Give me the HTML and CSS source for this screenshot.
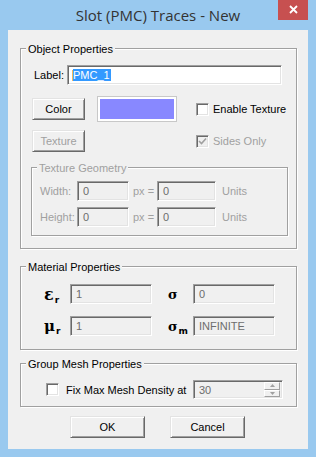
FILE: index.html
```html
<html lang="en">
<head>
    <meta charset="UTF-8">
    <title>Slot (PMC) Traces - New</title>
    <link rel="stylesheet" href="styles.css">
</head>
<body>
    <div class="window">
        <div class="titlebar">
            <span></span>
            <div class="title">Slot (PMC) Traces - New</div>
            <div class="close-cell">
                <span class="close">
                    <svg width="9" height="9" viewBox="0 0 9 9"><path d="M1 1L8 8M8 1L1 8" stroke="#fff" stroke-width="1.8" fill="none"/></svg>
                </span>
            </div>
        </div>
        <div class="client">
            <div class="group group-object">
                <div class="legend">Object Properties</div>
                <div class="row row-label">
                    <span class="label-caption">Label:</span>
                    <div class="edit edit-label"><span class="caret"></span><span class="sel">PMC_1</span></div>
                </div>
                <div class="row row-color">
                    <div class="btn btn-color">Color</div>
                    <div class="swatch"><div class="swatch-fill"></div></div>
                    <div class="check check-texture"><span class="box"></span>Enable Texture</div>
                </div>
                <div class="row row-texture">
                    <div class="btn btn-disabled">Texture</div>
                    <div class="check check-disabled check-sides">
                        <span class="box box-disabled">
                            <svg width="9" height="9" viewBox="0 0 9 9"><path d="M1 4L3.5 6.5L8 1.5" stroke="#a0a0a0" stroke-width="1.6" fill="none"/></svg>
                        </span>Sides Only
                    </div>
                </div>
                <div class="group group-geo">
                    <div class="legend legend-disabled">Texture Geometry</div>
                    <div class="geo-row">
                        <span class="geo-cap">Width:</span>
                        <div class="edit edit-disabled geo-a">0</div>
                        <span class="geo-px">px =</span>
                        <div class="edit edit-disabled geo-b">0</div>
                        <span class="geo-units">Units</span>
                    </div>
                    <div class="geo-row geo-row-2">
                        <span class="geo-cap">Height:</span>
                        <div class="edit edit-disabled geo-a">0</div>
                        <span class="geo-px">px =</span>
                        <div class="edit edit-disabled geo-b">0</div>
                        <span class="geo-units">Units</span>
                    </div>
                </div>
            </div>

            <div class="group group-material">
                <div class="legend">Material Properties</div>
                <div class="mat-row">
                    <span class="sym"><span class="sym-main eps">&#949;</span><span class="sym-sub">r</span></span>
                    <div class="edit edit-disabled mat-edit">1</div>
                    <span class="sym sym-2"><span class="sym-main sig">&#963;</span></span>
                    <div class="edit edit-disabled mat-edit">0</div>
                </div>
                <div class="mat-row mat-row-2">
                    <span class="sym"><span class="sym-main mu">&#956;</span><span class="sym-sub">r</span></span>
                    <div class="edit edit-disabled mat-edit">1</div>
                    <span class="sym sym-2"><span class="sym-main sig">&#963;</span><span class="sym-sub">m</span></span>
                    <div class="edit edit-disabled mat-edit">INFINITE</div>
                </div>
            </div>

            <div class="group group-mesh">
                <div class="legend">Group Mesh Properties</div>
                <div class="mesh-row">
                    <div class="check check-mesh"><span class="box"></span><span class="mesh-text">Fix Max Mesh Density at</span></div>
                    <div class="edit edit-disabled spin">
                        <span class="spin-val">30</span>
                        <span class="spin-btns">
                            <span class="spin-btn"><svg width="5" height="3" viewBox="0 0 5 3"><path d="M2.5 0L5 3H0z" fill="#a0a0a0"/></svg></span>
                            <span class="spin-btn"><svg width="5" height="3" viewBox="0 0 5 3"><path d="M0 0H5L2.5 3z" fill="#a0a0a0"/></svg></span>
                        </span>
                    </div>
                </div>
            </div>

            <div class="buttons">
                <div class="btn btn-dlg">OK</div>
                <div class="btn btn-dlg">Cancel</div>
            </div>
        </div>
    </div>
</body>
</html>
```

FILE: styles.css
```css
html {
    margin: 0;
    padding: 0;
}
body {
    margin: 0;
    padding: 0;
    font-family: "Liberation Sans", Arial, sans-serif;
    font-size: 11px;
    color: #000;
}
.window {
    width: 316px;
    height: 457px;
    box-sizing: border-box;
    background-color: #99c9ef;
    padding: 0 8px 8px 8px;
}
.titlebar {
    height: 30px;
    display: grid;
    grid-template-columns: 1fr auto 1fr;
}
.title {
    font-family: "Open Sans", "Noto Sans", sans-serif;
    font-size: 15px;
    color: #333;
    line-height: 30px;
    white-space: nowrap;
}
.close-cell {
    display: flex;
    justify-content: flex-end;
}
.close {
    width: 30px;
    height: 21px;
    background-color: #c75050;
    display: flex;
    align-items: center;
    justify-content: center;
    margin-top: -1px;
}
.client {
    height: 419px;
    box-sizing: border-box;
    background-color: #f0f0f0;
    padding: 18px 11px 0 12px;
}

/* group boxes */
.group {
    border: 1px solid #a0a0a0;
    box-shadow: 1px 1px 0 #fff, inset 1px 1px 0 #fff;
    box-sizing: border-box;
}
.legend {
    width: fit-content;
    height: 13px;
    line-height: 13px;
    margin: -6px 0 0 5px;
    padding: 0 2px;
    background-color: #f0f0f0;
    white-space: nowrap;
}
.legend-disabled {
    color: #a0a0a0;
}
.group-object {
    width: 277px;
    height: 201px;
}
.group-material {
    width: 277px;
    height: 84px;
    margin-top: 17px;
}
.group-mesh {
    width: 277px;
    height: 44px;
    margin-top: 13px;
}
.group-geo {
    width: 257px;
    height: 69px;
    margin: 15px 0 0 10px;
}

/* rows */
.row {
    display: flex;
    align-items: center;
}
.row-label {
    height: 20px;
    margin-top: 9px;
    padding-left: 13px;
}
.label-caption {
    width: 33px;
}
.row-color {
    height: 26px;
    margin-top: 11px;
    padding-left: 11px;
}
.row-texture {
    height: 22px;
    margin-top: 8px;
    padding-left: 11px;
}

/* edits */
.edit {
    height: 20px;
    box-sizing: border-box;
    border: 1px solid;
    border-color: #a0a0a0 #fff #fff #a0a0a0;
    box-shadow: inset 1px 1px 0 #696969, inset -1px -1px 0 #e3e3e3;
    padding-left: 5px;
    display: flex;
    align-items: center;
    background-color: #fff;
}
.edit-label {
    width: 215px;
}
.caret {
    width: 1px;
    height: 11px;
    background-color: #f4b860;
    margin-left: -1px;
}
.sel {
    background-color: #3399ff;
    color: #fff;
    line-height: 12px;
    padding-right: 1px;
}
.edit-disabled {
    background-color: #f0f0f0;
    color: #6d6d6d;
}

/* buttons */
.btn {
    height: 22px;
    box-sizing: border-box;
    border: 1px solid;
    border-color: #e3e3e3 #696969 #696969 #e3e3e3;
    box-shadow: inset 1px 1px 0 #fff, inset -1px -1px 0 #a0a0a0;
    background-color: #f0f0f0;
    display: flex;
    align-items: center;
    justify-content: center;
}
.btn-color {
    width: 53px;
}
.btn-disabled {
    width: 53px;
    color: #a0a0a0;
}
.swatch {
    width: 80px;
    height: 26px;
    box-sizing: border-box;
    margin-left: 12px;
    border: 1px solid #c8c8c8;
    padding: 2px;
    background-color: #fff;
}
.swatch-fill {
    height: 100%;
    background-color: #8888ff;
}

/* checkboxes */
.check {
    display: flex;
    align-items: center;
    white-space: nowrap;
}
.box {
    width: 13px;
    height: 13px;
    box-sizing: border-box;
    border: 1px solid;
    border-color: #a0a0a0 #fff #fff #a0a0a0;
    box-shadow: inset 1px 1px 0 #696969, inset -1px -1px 0 #e3e3e3;
    background-color: #fff;
    margin-right: 4px;
    display: flex;
    align-items: center;
    justify-content: center;
}
.box-disabled {
    background-color: #f0f0f0;
}
.check-texture {
    margin-left: 19px;
}
.check-sides {
    margin-left: 111px;
}
.check-disabled {
    color: #a0a0a0;
}

/* texture geometry */
.geo-row {
    display: flex;
    align-items: center;
    height: 20px;
    margin-top: 6px;
    padding-left: 8px;
    color: #a0a0a0;
}
.geo-cap {
    width: 37px;
}
.geo-a {
    width: 52px;
}
.geo-px {
    width: 28px;
    padding-left: 4px;
    box-sizing: border-box;
}
.geo-b {
    width: 59px;
}
.geo-units {
    margin-left: 6px;
}

/* material */
.mat-row {
    display: flex;
    align-items: center;
    height: 20px;
    margin-top: 10px;
}
.mat-row-2 {
    margin-top: 12px;
}
.sym {
    width: 26px;
    margin-left: 23px;
    display: flex;
    align-items: baseline;
    white-space: nowrap;
}
.sym-2 {
    width: 25px;
    margin-left: 16px;
}
.sym-main {
    font-family: "DejaVu Serif", serif;
    font-weight: bold;
    font-size: 15px;
}
.eps {
    font-size: 16px;
}
.sig {
    font-size: 13px;
}
.sym-sub {
    font-family: "DejaVu Sans", sans-serif;
    font-weight: bold;
    font-size: 9px;
    margin-left: 1px;
    position: relative;
    top: 3px;
}
.mat-edit {
    width: 82px;
    font-family: "Liberation Sans", Arial, sans-serif;
}

/* mesh */
.mesh-row {
    display: flex;
    align-items: center;
    height: 19px;
    margin-top: 9px;
    padding-left: 25px;
}
.check-mesh .box {
    margin-right: 7px;
}
.mesh-text {
    width: 127px;
}
.spin {
    width: 90px;
    height: 19px;
    padding-right: 2px;
}
.spin-val {
    flex: 1;
}
.spin-btns {
    width: 16px;
    height: 15px;
    display: flex;
    flex-direction: column;
}
.spin-btn {
    flex: 1;
    border: 1px solid;
    border-color: #fff #a0a0a0 #a0a0a0 #fff;
    background-color: #f0f0f0;
    display: flex;
    align-items: center;
    justify-content: center;
}

/* dialog buttons */
.buttons {
    display: flex;
    gap: 25px;
    margin-top: 9px;
    padding-left: 50px;
}
.btn-dlg {
    width: 75px;
}
```
